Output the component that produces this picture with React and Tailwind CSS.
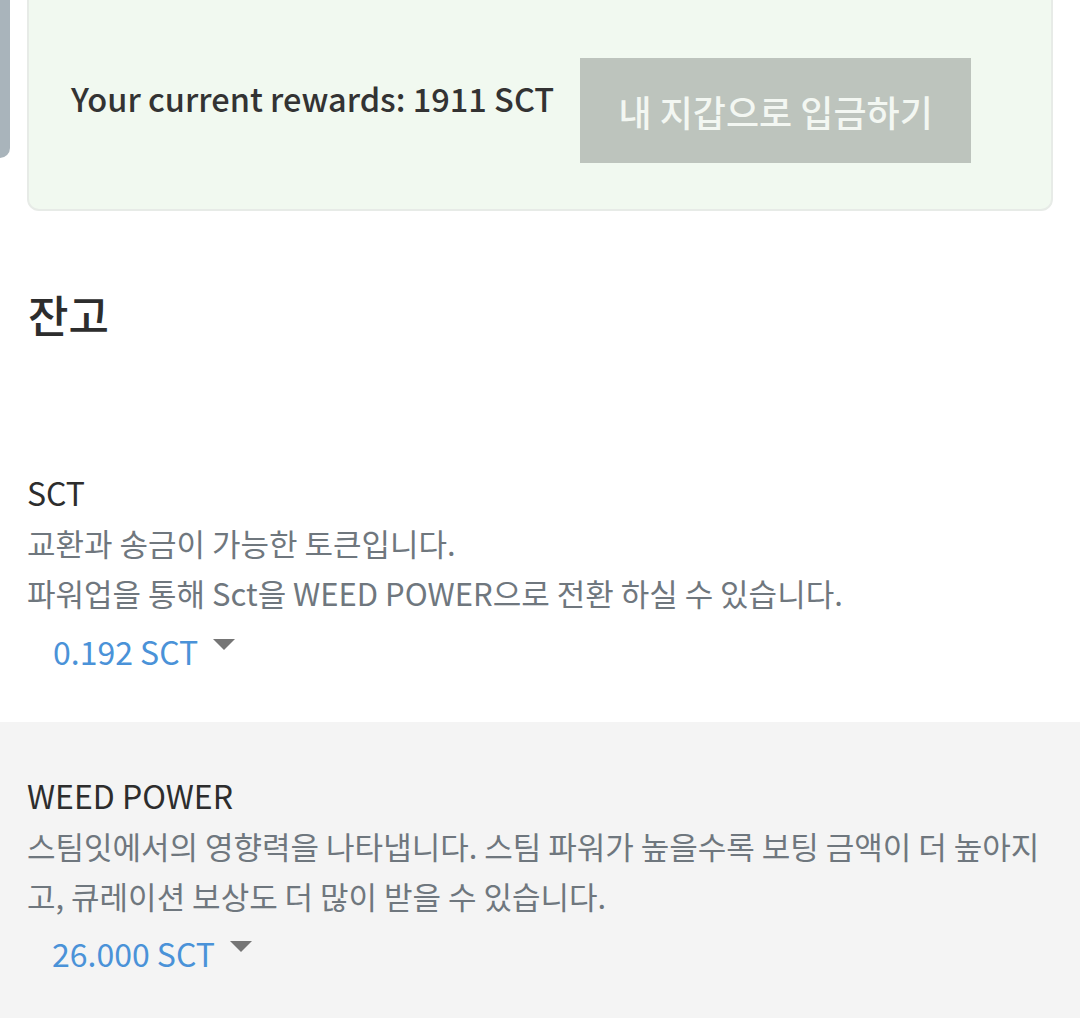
export default function App() {
  const font = { fontFamily: '"Noto Sans CJK KR", "Noto Sans", sans-serif' };
  return (
    <div className="relative min-h-[1018px] bg-white overflow-hidden" style={font}>
      <div className="absolute left-0 top-0 w-[10px] h-[158px] bg-[#a9b4bb] rounded-br-[10px]" />
      <div className="px-[27px]">
        <div className="-mt-[20px] h-[231px] rounded-[12px] border-2 border-[#e7ebe7] bg-[#f1f9f0] flex items-center pl-[42px] pt-[20px]">
          <div className="text-[32.5px] leading-none font-medium text-[#333333] mb-[14px]">Your current rewards: 1911 SCT</div>
          <div className="ml-[26px] w-[391px] h-[105px] bg-[#bdc4bd] flex items-center justify-center text-[36px] text-[#f3f7f2] font-medium mb-[-10px]">내 지갑으로 입금하기</div>
        </div>
      </div>
      <div className="px-[28px] pt-[81px] text-[44px] leading-none font-medium text-[#2d2d2d]">잔고</div>
      <div className="px-[27px] pt-[131px] pb-[41px]">
        <div className="text-[32px] leading-[51px] text-[#2d2d2d]">SCT</div>
        <div className="text-[31px] leading-[50px] text-[#6f777e]">교환과 송금이 가능한 토큰입니다.</div>
        <div className="text-[31px] leading-[50px] text-[#6f777e]">파워업을 통해 Sct을 WEED POWER으로 전환 하실 수 있습니다.</div>
        <div className="flex items-center pl-[26px] h-[60px] mt-[3px] text-[32px] text-[#4a92d8]">
          <span>0.192 SCT</span>
          <span className="ml-[15px] mb-[14px] w-0 h-0 border-l-[11px] border-r-[11px] border-t-[11px] border-l-transparent border-r-transparent border-t-[#757575]" />
        </div>
      </div>
      <div className="bg-[#f4f4f4] min-h-[296px] px-[27px] pt-[47px]">
        <div className="text-[32px] leading-[52px] text-[#2d2d2d]">WEED POWER</div>
        <div className="text-[31px] leading-[50px] text-[#6f777e] pr-[10px]">스팀잇에서의 영향력을 나타냅니다. 스팀 파워가 높을수록 보팅 금액이 더 높아지고, 큐레이션 보상도 더 많이 받을 수 있습니다.</div>
        <div className="flex items-center pl-[25px] h-[60px] mt-[2px] text-[32px] text-[#4a92d8]">
          <span>26.000 SCT</span>
          <span className="ml-[15px] mb-[14px] w-0 h-0 border-l-[11px] border-r-[11px] border-t-[11px] border-l-transparent border-r-transparent border-t-[#757575]" />
        </div>
      </div>
    </div>
  );
}
